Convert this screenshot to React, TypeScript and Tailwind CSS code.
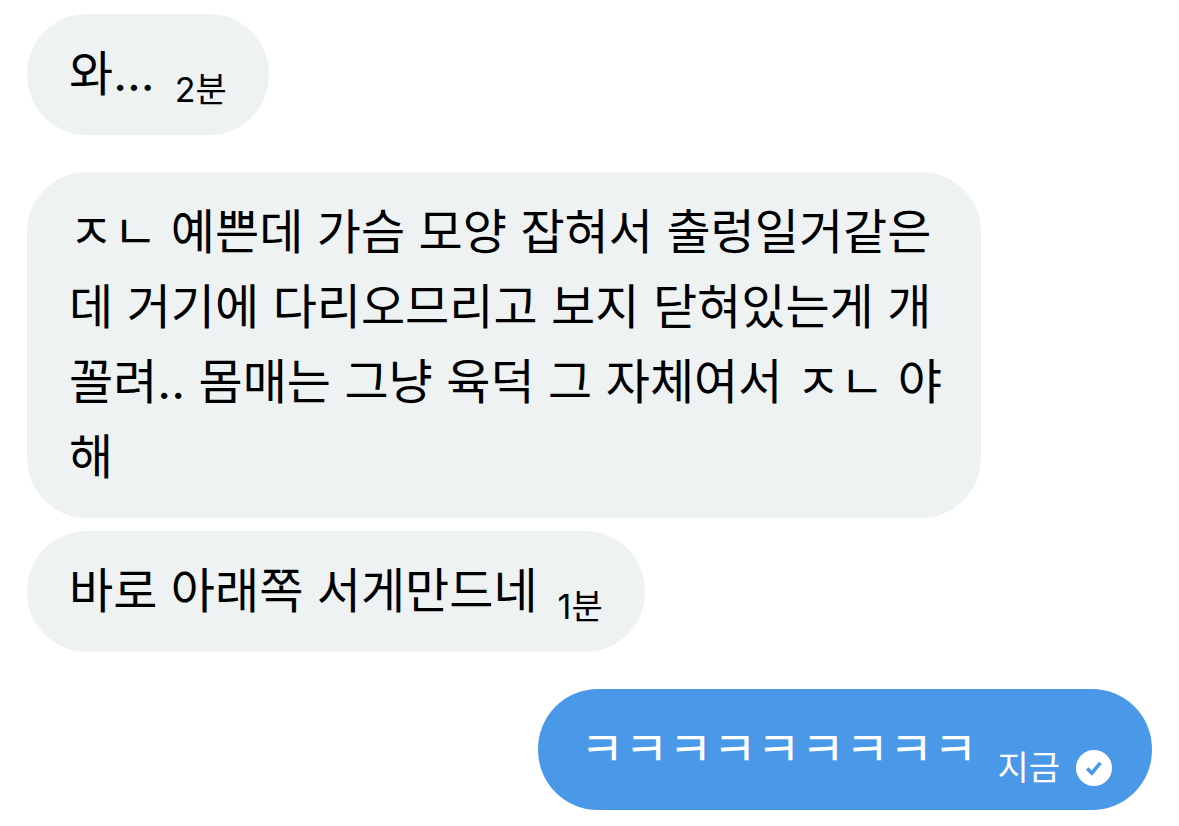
import { ReactNode } from "react"

interface BubbleProps {
  children: ReactNode
  time?: string
}

// 받은 메시지 말풍선
function ReceivedBubble({ children, time }: BubbleProps) {
  return (
    <div className="flex max-w-[954px] items-end gap-5 self-start rounded-[60px] bg-[#eef2f3] pt-[22px] pr-9 pb-6 pl-[42px] text-black">
      <p className="text-[48px] leading-[75px] break-all">{children}</p>
      {time && <time className="shrink-0 pr-1.5 text-[34px] leading-[42px]">{time}</time>}
    </div>
  )
}

// 전송 완료 표시
function SentIcon() {
  return (
    <svg viewBox="0 0 36 36" className="size-9" role="img" aria-label="전송됨">
      <circle cx="18" cy="18" r="18" fill="#fff" />
      <path d="M11.2 18.6l4.6 4.6L24.4 12.8" fill="none" stroke="#4a99e9" strokeWidth="3.6" />
    </svg>
  )
}

// 보낸 메시지 말풍선
function SentBubble({ children, time }: BubbleProps) {
  return (
    <div className="flex items-end gap-5 self-end rounded-[60px] bg-[#4a99e9] pt-[22px] pr-10 pb-6 pl-[42px] text-white">
      <p className="text-[48px] leading-[75px] break-all">{children}</p>
      <div className="flex shrink-0 items-center gap-4">
        <time className="text-[34px] leading-[36px]">{time}</time>
        <SentIcon />
      </div>
    </div>
  )
}

export default function App() {
  return (
    <main
      lang="ko"
      className="flex min-h-screen flex-col bg-white px-[27px] py-[14px] font-['Inter','Noto_Sans_CJK_KR',sans-serif]"
    >
      <ReceivedBubble time="2분">와...</ReceivedBubble>
      <div className="mt-[37px] flex flex-col gap-[13px]">
        <ReceivedBubble>
          ㅈㄴ 예쁜데 가슴 모양 잡혀서 출렁일거같은데 거기에 다리오므리고 보지 닫혀있는게 개꼴려.. 몸매는 그냥 육덕 그 자체여서 ㅈㄴ 야해
        </ReceivedBubble>
        <ReceivedBubble time="1분">바로 아래쪽 서게만드네</ReceivedBubble>
      </div>
      <div className="mt-[37px] flex flex-col">
        <SentBubble time="지금">ㅋㅋㅋㅋㅋㅋㅋㅋㅋ</SentBubble>
      </div>
    </main>
  )
}
